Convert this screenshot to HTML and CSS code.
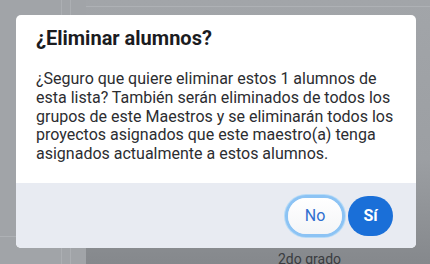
FILE: index.html
```html
<!DOCTYPE html>
<html lang="es">
<head>
<meta charset="utf-8">
<link rel="stylesheet" href="styles.css">
</head>
<body>
<div class="page">
  <div class="bg">
    <div class="bg-line-v v1"></div>
    <div class="bg-line-v v2"></div>
    <div class="bg-dark"></div>
    <div class="bg-line-h h1"></div>
    <div class="bg-line-h h2"></div>
    <div class="bg-text">2do grado</div>
  </div>
  <div class="dialog">
    <div class="dialog-body">
      <h2 class="dialog-title">¿Eliminar alumnos?</h2>
      <p class="dialog-text">¿Seguro que quiere eliminar estos 1 alumnos de esta lista? También serán eliminados de todos los grupos de este Maestros y se eliminarán todos los proyectos asignados que este maestro(a) tenga asignados actualmente a estos alumnos.</p>
    </div>
    <div class="dialog-footer">
      <button class="btn btn-no">No</button>
      <button class="btn btn-yes">Sí</button>
    </div>
  </div>
</div>
</body>
</html>
```
FILE: styles.css
```css
* { box-sizing: border-box; }
html, body { margin: 0; padding: 0; }
body {
  width: 430px;
  height: 264px;
  overflow: hidden;
  font-family: Roboto, "Liberation Sans", sans-serif;
}
.page {
  position: relative;
  width: 430px;
  height: 264px;
  background: #a1a4a8;
  overflow: hidden;
}
.bg { position: absolute; inset: 0; }
.bg-line-v {
  position: absolute;
  top: 0;
  bottom: 0;
  width: 1px;
  background: #acafb3;
}
.v1 { left: 61px; }
.v2 { left: 70px; }
.bg-dark {
  position: absolute;
  left: 86px;
  top: 0;
  right: 0;
  bottom: 0;
  background: linear-gradient(180deg, #a2a5a9 0%, #9c9fa3 60%, #85888c 100%);
}
.bg-line-h {
  position: absolute;
  height: 1px;
  background: #aeb1b5;
}
.h1 { left: 86px; right: 0; top: 6px; }
.h2 { left: 0; width: 86px; top: 236px; }
.bg-text {
  position: absolute;
  left: 278px;
  top: 251px;
  font-size: 14px;
  color: #3a3c40;
}
.dialog {
  position: absolute;
  left: 16px;
  top: 15px;
  width: 400px;
  height: 233px;
  background: #ffffff;
  border-radius: 5px;
  overflow: hidden;
  display: flex;
  flex-direction: column;
}
.dialog-body {
  padding: 11px 6px 0 20px;
  height: 168px;
}
.dialog-title {
  margin: 0;
  font-size: 20px;
  line-height: 24px;
  font-weight: 700;
  color: #1b1c1f;
}
.dialog-text {
  margin: 20px 0 0;
  font-size: 16px;
  line-height: 18.75px;
  color: #2c2d31;
}
.dialog-footer {
  flex: 1;
  background: #e8ebf2;
  display: flex;
  justify-content: flex-end;
  align-items: center;
  gap: 6px;
  padding: 0 23px 0 0;
}
.btn {
  font-family: Roboto, "Liberation Sans", sans-serif;
  font-size: 16px;
  height: 38px;
  border-radius: 19px;
  border: none;
  cursor: pointer;
}
.btn-no {
  width: 54px;
  height: 36px;
  background: linear-gradient(180deg, #ffffff 0%, #f4f5f7 100%);
  color: #2f6fd0;
  box-shadow: 0 0 0 3px #8cc3f4, 0 0 0 4px #b7dbf7;
}
.btn-yes {
  width: 45px;
  height: 40px;
  border-radius: 20px;
  background: #1a6fd8;
  color: #ffffff;
  font-weight: 700;
}
```
